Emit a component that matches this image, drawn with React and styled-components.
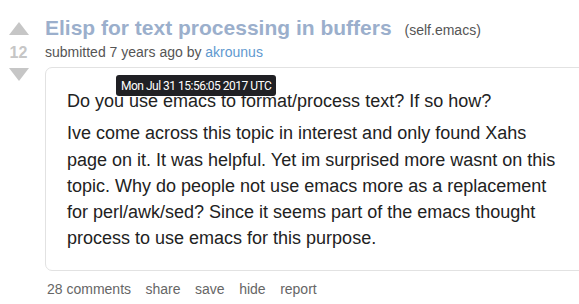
import React from "react";
import styled, { createGlobalStyle } from "styled-components";

const GlobalStyle = createGlobalStyle`
  html, body {
    margin: 0;
    padding: 0;
    background: #ffffff;
    overflow: hidden;
  }
  body {
    font-family: "Liberation Sans", Arial, sans-serif;
  }
`;

const Page = styled.div`
  position: relative;
  display: flex;
  align-items: flex-start;
  padding-top: 16px;
  width: 579px;
  height: 304px;
  overflow: hidden;
  box-sizing: border-box;
`;

const VoteCol = styled.div`
  width: 37px;
  flex: none;
  display: flex;
  flex-direction: column;
  align-items: center;
  padding-top: 6px;
`;

const Arrow = styled.div`
  width: 0;
  height: 0;
  border-left: 10px solid transparent;
  border-right: 10px solid transparent;
  ${(p) =>
    p.$down
      ? "border-top: 13px solid #c6c6c6; margin-top: 6px;"
      : "border-bottom: 13px solid #c6c6c6;"}
`;

const Score = styled.div`
  margin-top: 9px;
  font-size: 16px;
  line-height: 18px;
  font-weight: bold;
  color: #c6c6c6;
`;

const Main = styled.div`
  margin-left: 8px;
  flex: none;
  display: flex;
  flex-direction: column;
`;

const TitleRow = styled.div`
  display: flex;
  align-items: baseline;
  gap: 13px;
  white-space: nowrap;
`;

const Title = styled.a`
  font-size: 21px;
  line-height: 24px;
  font-weight: bold;
  color: #9bafcc;
  text-decoration: none;
`;

const Domain = styled.span`
  font-size: 14px;
  color: #555555;
`;

const Tagline = styled.div`
  margin-top: 3px;
  font-size: 14px;
  line-height: 18px;
  color: #555555;
`;

const Author = styled.a`
  color: #5f99cf;
  text-decoration: none;
`;

const Box = styled.div`
  margin-top: 6px;
  width: 560px;
  border: 1px solid #e2e2e2;
  border-radius: 7px;
  padding: 20px 20px 18px 21px;
  background: #ffffff;
  box-sizing: border-box;
`;

const Para = styled.p`
  margin: 0;
  max-width: 500px;
  font-size: 18px;
  line-height: 26.3px;
  color: #222222;
  & + & {
    margin-top: 6px;
  }
`;

const Buttons = styled.ul`
  list-style: none;
  margin: 9px 0 0 2px;
  padding: 0;
  display: flex;
  gap: 14.5px;
  font-size: 14px;
  line-height: 18px;
`;

const ButtonLink = styled.li`
  color: #666666;
`;

const Tooltip = styled.div`
  position: absolute;
  left: 116px;
  top: 75px;
  height: 21px;
  padding: 0 5px;
  display: flex;
  align-items: center;
  background: #202024;
  border-radius: 3px;
  color: #ffffff;
  font-family: Roboto, "Noto Sans", sans-serif;
  font-size: 12px;
  letter-spacing: -0.5px;
  white-space: nowrap;
`;

export default function App() {
  return (
    <>
      <GlobalStyle />
      <Page>
        <VoteCol>
          <Arrow />
          <Score>12</Score>
          <Arrow $down />
        </VoteCol>
        <Main>
          <TitleRow>
            <Title href="#">Elisp for text processing in buffers</Title>
            <Domain>(self.emacs)</Domain>
          </TitleRow>
          <Tagline>
            submitted 7 years ago by <Author href="#">akrounus</Author>
          </Tagline>
          <Box>
            <Para>Do you use emacs to format/process text? If so how?</Para>
            <Para>
              Ive come across this topic in interest and only found Xahs page
              on it. It was helpful. Yet im surprised more wasnt on this topic.
              Why do people not use emacs more as a replacement for
              perl/awk/sed? Since it seems part of the emacs thought process to
              use emacs for this purpose.
            </Para>
          </Box>
          <Buttons>
            <ButtonLink>28 comments</ButtonLink>
            <ButtonLink>share</ButtonLink>
            <ButtonLink>save</ButtonLink>
            <ButtonLink>hide</ButtonLink>
            <ButtonLink>report</ButtonLink>
          </Buttons>
        </Main>
        <Tooltip>Mon Jul 31 15:56:05 2017 UTC</Tooltip>
      </Page>
    </>
  );
}
